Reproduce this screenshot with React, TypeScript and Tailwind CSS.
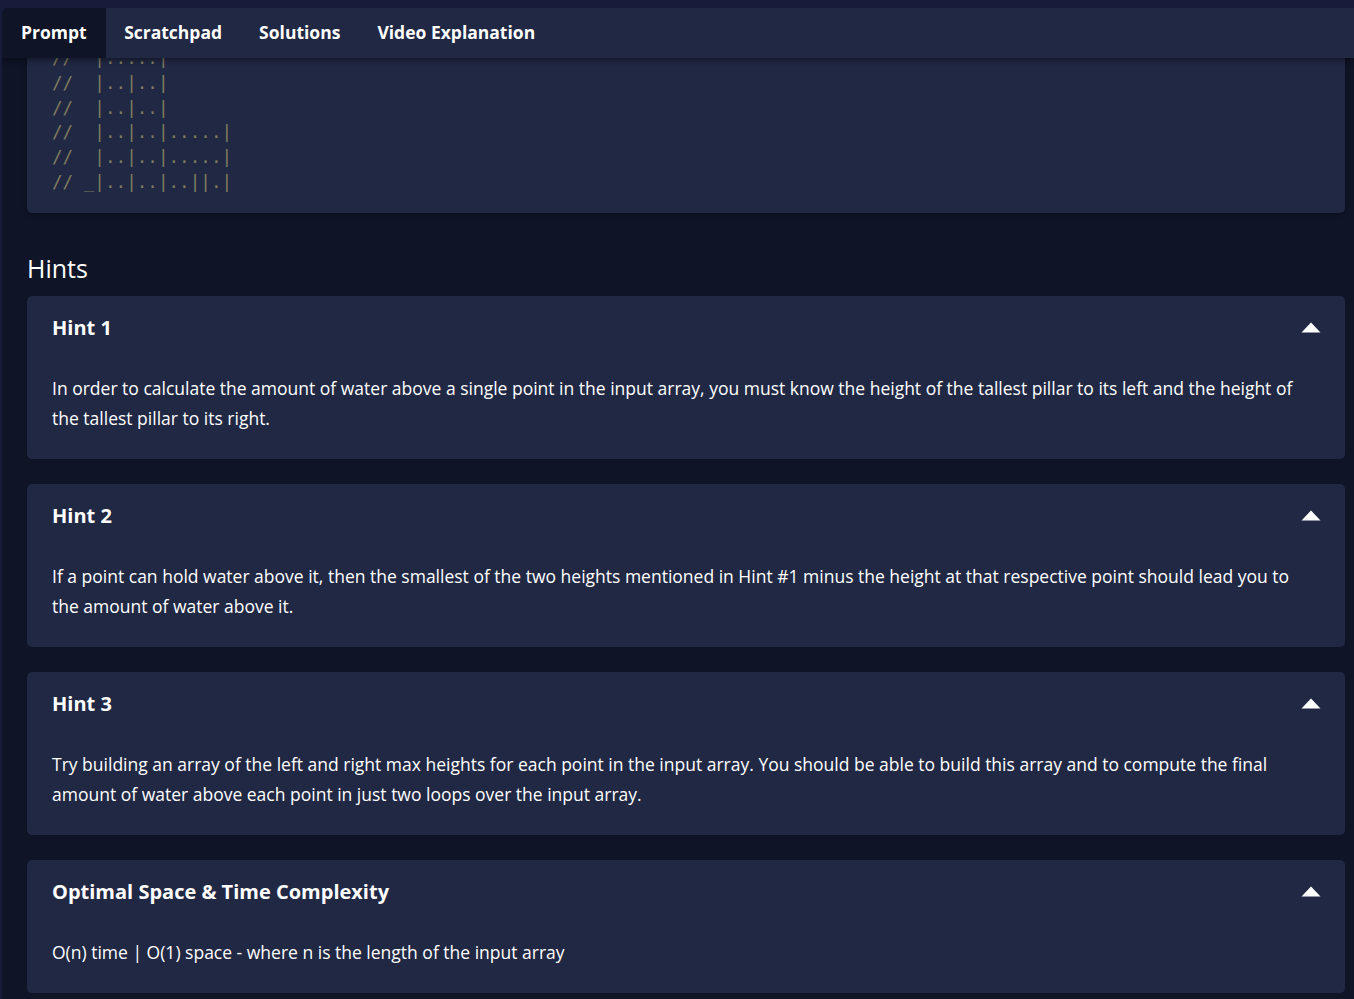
const tabs = ["Prompt", "Scratchpad", "Solutions", "Video Explanation"];

const codeLines = [
  "//  |.....|",
  "//  |..|..|",
  "//  |..|..|",
  "//  |..|..|.....|",
  "//  |..|..|.....|",
  "// _|..|..|..||.|",
];

const hints = [
  {
    title: "Hint 1",
    body: "In order to calculate the amount of water above a single point in the input array, you must know the height of the tallest pillar to its left and the height of the tallest pillar to its right.",
  },
  {
    title: "Hint 2",
    body: "If a point can hold water above it, then the smallest of the two heights mentioned in Hint #1 minus the height at that respective point should lead you to the amount of water above it.",
  },
  {
    title: "Hint 3",
    body: "Try building an array of the left and right max heights for each point in the input array. You should be able to build this array and to compute the final amount of water above each point in just two loops over the input array.",
  },
  {
    title: "Optimal Space & Time Complexity",
    body: "O(n) time | O(1) space - where n is the length of the input array",
  },
];

function CaretUp() {
  return (
    <svg width="20" height="11" viewBox="0 0 20 11" className="shrink-0">
      <polygon points="10,0.5 19.5,10.5 0.5,10.5" fill="#ffffff" />
    </svg>
  );
}

function HintCard({ title, body }: { title: string; body: string }) {
  return (
    <div className="rounded-[5px] bg-[#212844] pl-[25px] pr-[24px] pt-[19px] pb-[26px]">
      <div className="flex items-center justify-between">
        <h3 className="text-[20px] leading-[26px] font-bold text-white">{title}</h3>
        <CaretUp />
      </div>
      <p className="mt-[32px] pr-[12px] text-[17.5px] leading-[30px] text-white">{body}</p>
    </div>
  );
}

export default function App() {
  return (
    <div
      className="h-[999px] w-full overflow-hidden bg-[#161c3a] pt-[8px] pl-[2px]"
      style={{ fontFamily: '"Open Sans", "Noto Sans", sans-serif' }}
    >
      <div className="flex h-full flex-col overflow-hidden rounded-tl-[6px] bg-[#0f1427]">
        {/* Tab bar */}
        <div className="relative z-10 flex h-[50px] shrink-0 items-stretch bg-[#212844] pb-[2px] shadow-[0_2px_6px_rgba(0,0,0,0.45)]">
          {tabs.map((t, i) => (
            <div
              key={t}
              className={
                i === 0
                  ? "-mb-[2px] flex items-center bg-[#0f1427] px-[19px] pb-[2px] text-[17.5px] font-bold text-white"
                  : "flex items-center px-[18.5px] text-[17.5px] font-bold text-white"
              }
            >
              {t}
            </div>
          ))}
        </div>

        {/* Scrolled content */}
        <div className="-mt-[13px] flex flex-col pl-[25px] pr-[9px]">
          <div className="rounded-b-[5px] bg-[#212844] pl-[25px] pt-[1px] pb-[18px] shadow-[0_2px_4px_rgba(0,0,0,0.3)]">
            <pre
              className="text-[17.6px] leading-[24.75px] text-[#7d7c5f]"
              style={{ fontFamily: '"DejaVu Sans Mono", "Liberation Mono", monospace' }}
            >
              {codeLines.join("\n")}
            </pre>
          </div>

          <h2 className="mt-[39px] mb-[12px] text-[25px] leading-[32px] text-white">Hints</h2>

          <div className="flex flex-col gap-[25px]">
            {hints.map((h) => (
              <HintCard key={h.title} title={h.title} body={h.body} />
            ))}
          </div>
        </div>
      </div>
    </div>
  );
}
